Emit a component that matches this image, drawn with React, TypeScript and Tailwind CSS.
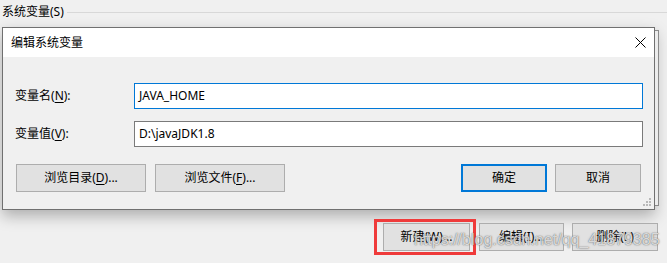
import type { ReactNode } from 'react'

const font = "font-['Noto_Sans','Noto_Sans_CJK_SC',sans-serif]"

function WinButton({
  children,
  className = '',
  primary = false,
}: {
  children: ReactNode
  className?: string
  primary?: boolean
}) {
  return (
    <button
      type="button"
      className={`flex h-[28px] items-center justify-center bg-[#e1e1e1] text-[12px] text-black ${
        primary ? 'border-2 border-[#0078d7]' : 'border border-[#adadad]'
      } ${className}`}
    >
      {children}
    </button>
  )
}

function Field({ label, hot, rest, value, focused }: {
  label: string
  hot: string
  rest: string
  value: string
  focused?: boolean
}) {
  return (
    <div className="flex items-center pl-[12px] pr-[11px]">
      <span className="w-[119px] text-[12px] text-black">
        {label}(<span className="underline underline-offset-2">{hot}</span>){rest}
      </span>
      <div
        className={`flex h-[26px] flex-1 items-center border bg-white pl-[4px] text-[12px] text-black ${
          focused ? 'border-[#0078d7]' : 'border-[#7a7a7a]'
        }`}
      >
        {value}
      </div>
    </div>
  )
}

export default function App() {
  return (
    <div className={`relative h-[263px] w-[667px] overflow-hidden bg-[#f0f0f0] ${font}`}>
      {/* 背后窗口的分组标题 */}
      <div className="flex h-[24px] items-center pl-[2px]">
        <span className="text-[12px] text-black">系统变量(S)</span>
        <div className="ml-[3px] h-px flex-1 bg-[#d8d8d8]" />
      </div>

      <div className="mt-[3px] flex items-start pl-[2px]">
        {/* 编辑系统变量 对话框 */}
        <div className="flex h-[183px] w-[653px] flex-col border border-[#707070] bg-[#f0f0f0] shadow-[0_6px_14px_rgba(0,0,0,0.28)]">
          <div className="flex h-[29px] items-center justify-between bg-white pl-[8px] pr-[8px]">
            <span className="text-[12px] text-black">编辑系统变量</span>
            <svg width="11" height="11" viewBox="0 0 11 11" className="mb-[1px]">
              <path d="M0.5 0.5 L10.5 10.5 M10.5 0.5 L0.5 10.5" stroke="#000" strokeWidth="1" fill="none" />
            </svg>
          </div>

          <div className="flex flex-1 flex-col pt-[26px]">
            <Field label="变量名" hot="N" rest=":" value="JAVA_HOME" focused />
            <div className="h-[12px]" />
            <Field label="变量值" hot="V" rest=":" value="D:\javaJDK1.8" />

            <div className="mt-[17px] flex items-center pl-[13px] pr-[13px]">
              <WinButton className="w-[130px]">
                浏览目录(<span className="underline underline-offset-2">D</span>)...
              </WinButton>
              <WinButton className="ml-[9px] w-[130px]">
                浏览文件(<span className="underline underline-offset-2">F</span>)...
              </WinButton>
              <div className="flex-1" />
              <WinButton primary className="w-[86px]">确定</WinButton>
              <WinButton className="ml-[8px] w-[86px]">取消</WinButton>
            </div>

            <div className="flex flex-1 items-end justify-end pb-[2px] pr-[2px]">
              <svg width="9" height="9" viewBox="0 0 9 9">
                <rect x="6" y="0" width="2" height="2" fill="#b8b8b8" />
                <rect x="3" y="3" width="2" height="2" fill="#b8b8b8" />
                <rect x="6" y="3" width="2" height="2" fill="#b8b8b8" />
                <rect x="0" y="6" width="2" height="2" fill="#b8b8b8" />
                <rect x="3" y="6" width="2" height="2" fill="#b8b8b8" />
                <rect x="6" y="6" width="2" height="2" fill="#b8b8b8" />
              </svg>
            </div>
          </div>
        </div>
        {/* 后面窗口的边 */}
        <div className="mt-[3px] h-[176px] w-[4px] border-r border-t border-b border-[#8a8a8a] bg-[#ececec]" />
      </div>

      {/* 底部按钮 */}
      <div className="relative mt-[9px] flex items-center justify-end pr-[9px]">
        <div className="border-[3px] border-[#ef3b3b] py-[1px] pl-[6px] pr-[3px]">
          <WinButton className="h-[27px] w-[87px]">新建(W)...</WinButton>
        </div>
        <WinButton className="ml-[3px] h-[27px] w-[85px]">编辑(I)...</WinButton>
        <WinButton className="ml-[8px] h-[27px] w-[86px]">删除(L)</WinButton>
      </div>

      {/* 水印 */}
      <span className="pointer-events-none absolute left-[414px] top-[231px] font-['Liberation_Sans',sans-serif] text-[16px] leading-[18px] text-white/75 [text-shadow:0_0_1px_rgba(60,60,60,0.8),0_0_2px_rgba(120,120,120,0.5)]">
        https://blog.csdn.net/qq_41879385
      </span>
    </div>
  )
}
